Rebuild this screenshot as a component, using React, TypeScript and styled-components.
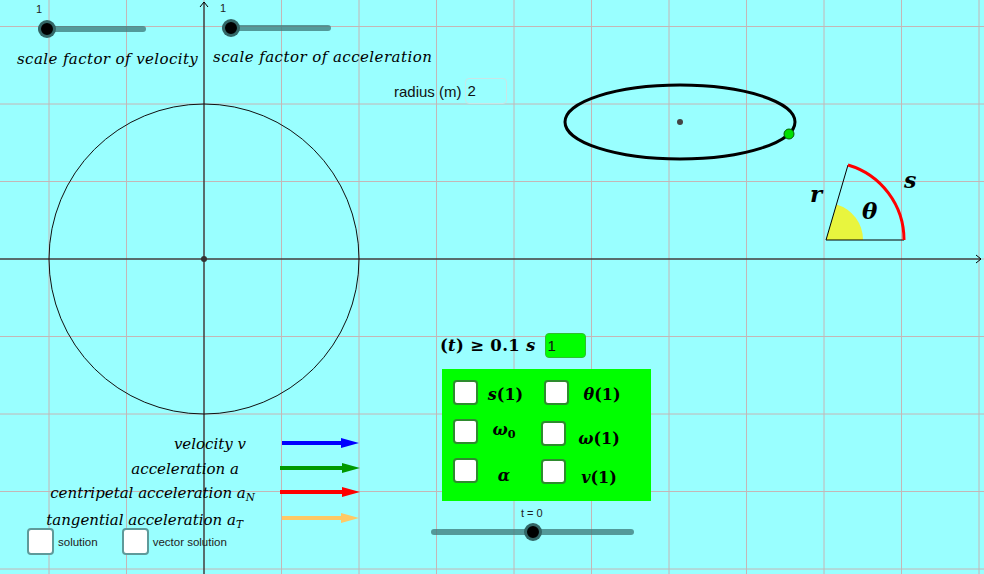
import React from "react";
import styled, { createGlobalStyle } from "styled-components";

const GlobalStyle = createGlobalStyle`
  html, body {
    margin: 0;
    padding: 0;
    overflow: hidden;
  }
  body {
    font-family: "Liberation Sans", Arial, sans-serif;
  }
`;

const STEP = 77.5;
const OX = 204;
const OY = 259;

const Canvas = styled.div`
  position: relative;
  width: 984px;
  height: 574px;
  background: #99ffff;
  overflow: hidden;
`;

const Drawing = styled.svg`
  position: absolute;
  left: 0;
  top: 0;
`;

const MathText = styled.div<{ $x: number; $y: number; $size?: number; $bold?: boolean; $track?: number }>`
  position: absolute;
  left: ${(p) => p.$x}px;
  top: ${(p) => p.$y}px;
  font-family: "DejaVu Serif", "Liberation Serif", serif;
  font-style: italic;
  font-weight: ${(p) => (p.$bold ? 700 : 400)};
  font-size: ${(p) => p.$size ?? 14}px;
  letter-spacing: ${(p) => p.$track ?? 0}px;
  color: #000;
  white-space: nowrap;
  line-height: 1;
`;

const Sub = styled.sub`
  font-size: 0.7em;
  vertical-align: -0.3em;
`;

/* sliders */
const SliderWrap = styled.div<{ $x: number; $y: number; $w: number }>`
  position: absolute;
  left: ${(p) => p.$x}px;
  top: ${(p) => p.$y}px;
  width: ${(p) => p.$w}px;
  height: 20px;
`;

const Track = styled.div`
  position: absolute;
  left: 0;
  right: 0;
  top: 7px;
  height: 6px;
  border-radius: 3px;
  background: rgba(60, 120, 120, 0.75);
`;

const Thumb = styled.div<{ $at: number }>`
  position: absolute;
  left: ${(p) => p.$at - 9}px;
  top: 1px;
  width: 12px;
  height: 12px;
  border-radius: 50%;
  background: #000;
  border: 3px solid rgba(60, 120, 120, 0.85);
`;

const SliderLabel = styled.div<{ $x: number; $y: number }>`
  position: absolute;
  left: ${(p) => p.$x}px;
  top: ${(p) => p.$y}px;
  font-size: 11px;
  color: #222;
  font-family: "Liberation Sans", Arial, sans-serif;
`;

/* input boxes */
const FieldRow = styled.div<{ $x: number; $y: number; $gap?: number }>`
  position: absolute;
  left: ${(p) => p.$x}px;
  top: ${(p) => p.$y}px;
  display: flex;
  align-items: center;
  gap: ${(p) => p.$gap ?? 3}px;
`;

const FieldCaption = styled.span`
  font-family: "Liberation Sans", Arial, sans-serif;
  font-size: 15px;
  color: #111;
`;

const FieldBox = styled.div<{ $w: number; $h?: number; $bg: string; $border: string }>`
  width: ${(p) => p.$w}px;
  height: ${(p) => p.$h ?? 24}px;
  box-sizing: border-box;
  border: 1px solid ${(p) => p.$border};
  border-radius: 4px;
  background: ${(p) => p.$bg};
  font-family: "Liberation Sans", Arial, sans-serif;
  font-size: 15px;
  line-height: ${(p) => (p.$h ?? 24) - 2}px;
  padding-left: 2px;
  color: #111;
`;

const BoldMath = styled.span`
  font-family: "DejaVu Serif", "Liberation Serif", serif;
  font-weight: 700;
  font-size: 16.5px;
  letter-spacing: 0.3px;
`;

/* green panel */
const Panel = styled.div`
  position: absolute;
  left: 442px;
  top: 369px;
  width: 209px;
  height: 132px;
  background: #00ff00;
  box-sizing: border-box;
  padding: 11px 0 0 11px;
  display: grid;
  grid-template-columns: 90px 100px;
  grid-auto-rows: 39px;
`;

const Option = styled.div<{ $dx?: number; $dy?: number; $ly?: number; $lw: number }>`
  display: grid;
  grid-template-columns: 25px ${(p) => p.$lw}px;
  align-items: start;
  margin-left: ${(p) => p.$dx ?? 0}px;
  margin-top: ${(p) => p.$dy ?? 0}px;

  & > span {
    margin-top: ${(p) => p.$ly ?? 2}px;
  }
`;

const Box = styled.div<{ $border: string; $size: number }>`
  width: ${(p) => p.$size}px;
  height: ${(p) => p.$size}px;
  box-sizing: border-box;
  background: #fff;
  border: 2px solid ${(p) => p.$border};
  border-radius: 4px;
  flex: none;
`;

const OptionLabel = styled.span`
  font-family: "DejaVu Serif", "Liberation Serif", serif;
  font-weight: 700;
  font-size: 16px;
  text-align: center;
  white-space: nowrap;

  & i {
    font-style: italic;
  }
`;

/* legend */
const Legend = styled.div`
  position: absolute;
  right: 729px;
  top: 436px;
  display: flex;
  flex-direction: column;
  align-items: flex-end;
`;

const LegendItem = styled.div<{ $shift: number; $top: number }>`
  font-family: "DejaVu Serif", "Liberation Serif", serif;
  font-style: italic;
  font-weight: 400;
  font-size: 15px;
  line-height: 17px;
  margin-right: ${(p) => p.$shift}px;
  margin-top: ${(p) => p.$top}px;
  white-space: nowrap;
`;

const CheckRow = styled.div`
  position: absolute;
  left: 27px;
  top: 528px;
  display: flex;
  align-items: center;
`;

const CheckItem = styled.div`
  display: flex;
  align-items: center;
  gap: 4px;
  margin-right: 24px;
  font-family: "Liberation Sans", Arial, sans-serif;
  font-size: 11.5px;
  color: #222;
`;

const Slider = ({ x, y, w, at }: { x: number; y: number; w: number; at: number }) => (
  <SliderWrap $x={x} $y={y} $w={w}>
    <Track />
    <Thumb $at={at} />
  </SliderWrap>
);

const Arrow = ({ y, color, x1 = 282, x2 = 359 }: { y: number; color: string; x1?: number; x2?: number }) => (
  <g>
    <line x1={x1} y1={y} x2={x2 - 14} y2={y} stroke={color} strokeWidth={4} />
    <polygon points={`${x2 - 18},${y - 5} ${x2},${y} ${x2 - 18},${y + 5}`} fill={color} />
  </g>
);

function Plot() {
  const vx: number[] = [];
  for (let k = -3; k <= 10; k++) vx.push(OX + k * STEP);
  const hy: number[] = [];
  for (let k = -4; k <= 5; k++) hy.push(OY + k * STEP);
  return (
    <Drawing width={984} height={574} viewBox="0 0 984 574">
      {vx.map((x) => (
        <line key={"v" + x} x1={x} y1={0} x2={x} y2={574} stroke="#c4b6b6" strokeWidth={1} />
      ))}
      {hy.map((y) => (
        <line key={"h" + y} x1={0} y1={y} x2={984} y2={y} stroke="#c4b6b6" strokeWidth={1} />
      ))}
      {/* axes */}
      <line x1={0} y1={OY} x2={981} y2={OY} stroke="#000" strokeWidth={1} />
      <polyline points={`976,${OY - 4} 981,${OY} 976,${OY + 4}`} fill="none" stroke="#000" />
      <line x1={OX} y1={2} x2={OX} y2={574} stroke="#000" strokeWidth={1} />
      <polyline points={`${OX - 4},7 ${OX},2 ${OX + 4},7`} fill="none" stroke="#000" />
      {/* circle */}
      <circle cx={OX} cy={OY} r={155} fill="none" stroke="#111" strokeWidth={1} />
      <circle cx={OX} cy={OY} r={3} fill="#333" />
      {/* ellipse */}
      <ellipse cx={680} cy={122} rx={115} ry={37} fill="none" stroke="#000" strokeWidth={3} />
      <circle cx={680} cy={122} r={3} fill="#444" />
      <circle cx={789} cy={134} r={5} fill="#00e000" stroke="#006000" strokeWidth={1} />
      {/* sector */}
      <path d="M826,240 L863,240 A37,37 0 0 0 836.6,204.5 Z" fill="#e8f53e" />
      <path d="M826,240 L904,240 M826,240 L848,165" stroke="#000" strokeWidth={1} fill="none" />
      <path d="M904,240 A78,78 0 0 0 848,165" stroke="#f00" strokeWidth={3} fill="none" />
      {/* legend arrows */}
      <Arrow y={443} color="#0000ff" />
      <Arrow y={468} color="#009900" x1={280} x2={360} />
      <Arrow y={492} color="#ff0000" x1={280} x2={360} />
      <Arrow y={518} color="#ffc966" />
    </Drawing>
  );
}

export default function App() {
  return (
    <>
      <GlobalStyle />
      <Canvas>
        <Plot />

        <SliderLabel $x={36} $y={3}>1</SliderLabel>
        <Slider x={38} y={19} w={108} at={9} />
        <MathText $x={17} $y={52} $size={15} $track={0.4}>scale factor of velocity</MathText>

        <SliderLabel $x={220} $y={2}>1</SliderLabel>
        <Slider x={222} y={18} w={109} at={9} />
        <MathText $x={213} $y={50} $size={15} $track={0.45}>scale factor of acceleration</MathText>

        <FieldRow $x={394} $y={78}>
          <FieldCaption>radius (m)</FieldCaption>
          <FieldBox $w={42} $h={26} $bg="transparent" $border="#c9e6e6">2</FieldBox>
        </FieldRow>

        <MathText $x={810} $y={182} $size={23} $bold>r</MathText>
        <MathText $x={904} $y={169} $size={22} $bold>s</MathText>
        <MathText $x={862} $y={199} $size={23} $bold>θ</MathText>

        <FieldRow $x={440} $y={333} $gap={9}>
          <BoldMath>
            (<i>t</i>) ≥ 0.1 <i>s</i>
          </BoldMath>
          <FieldBox $w={41} $h={25} $bg="#00ff00" $border="#2fbf2f">1</FieldBox>
        </FieldRow>

        <Panel>
          <Option $lw={55} $ly={5}>
            <Box $border="#2e8b2e" $size={25} />
            <OptionLabel>
              <i>s</i>(1)
            </OptionLabel>
          </Option>
          <Option $lw={66} $dx={1} $ly={5}>
            <Box $border="#2e8b2e" $size={25} />
            <OptionLabel>
              <i>θ</i>(1)
            </OptionLabel>
          </Option>
          <Option $lw={52} $ly={1}>
            <Box $border="#2e8b2e" $size={25} />
            <OptionLabel>
              <i>ω</i>
              <Sub>0</Sub>
            </OptionLabel>
          </Option>
          <Option $lw={66} $dx={-2} $dy={2} $ly={8}>
            <Box $border="#2e8b2e" $size={25} />
            <OptionLabel>
              <i>ω</i>(1)
            </OptionLabel>
          </Option>
          <Option $lw={52} $ly={8}>
            <Box $border="#2e8b2e" $size={25} />
            <OptionLabel>
              <i>α</i>
            </OptionLabel>
          </Option>
          <Option $lw={66} $dx={-2} $dy={1} $ly={9}>
            <Box $border="#2e8b2e" $size={25} />
            <OptionLabel>
              <i>v</i>(1)
            </OptionLabel>
          </Option>
        </Panel>

        <Legend>
          <LegendItem $shift={9} $top={0}>velocity v</LegendItem>
          <LegendItem $shift={16} $top={8}>acceleration a</LegendItem>
          <LegendItem $shift={0} $top={7}>
            centripetal acceleration a<Sub>N</Sub>
          </LegendItem>
          <LegendItem $shift={12} $top={6}>
            tangential acceleration a<Sub>T</Sub>
          </LegendItem>
        </Legend>

        <CheckRow>
          <CheckItem>
            <Box $border="#5f9a9a" $size={27} />
            solution
          </CheckItem>
          <CheckItem>
            <Box $border="#5f9a9a" $size={27} />
            vector solution
          </CheckItem>
        </CheckRow>

        <SliderLabel $x={521} $y={507}>t = 0</SliderLabel>
        <Slider x={431} y={522} w={203} at={102} />
      </Canvas>
    </>
  );
}
